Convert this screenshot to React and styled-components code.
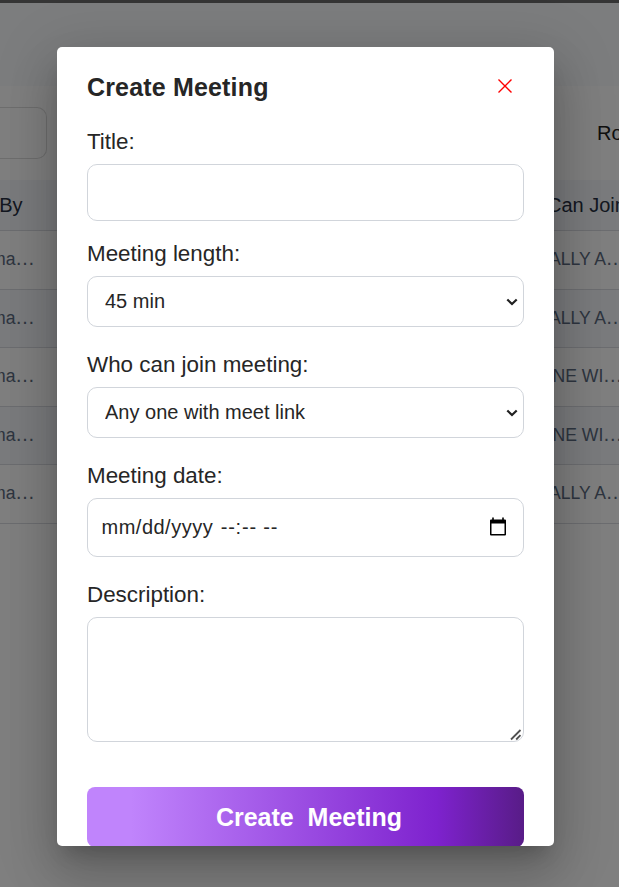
import React from "react";
import styled, { createGlobalStyle } from "styled-components";

const GlobalStyle = createGlobalStyle`
  *, *::before, *::after { box-sizing: border-box; }
  html, body { margin: 0; padding: 0; height: 100%; overflow: hidden; }
  body {
    background: #fff;
    color: #262626;
    font-family: "Liberation Sans", Arial, sans-serif;
  }
`;

const Screen = styled.div`
  position: relative;
  height: 887px;
  overflow: hidden;
`;

const Page = styled.div`
  display: flex;
  flex-direction: column;
  height: 100%;
  background: #fff;
`;

const HeaderBand = styled.header`
  height: 86px;
  flex: none;
  border-top: 3px solid #6a6a6a;
  background: #f8fafd;
`;

const Toolbar = styled.div`
  display: flex;
  justify-content: space-between;
  align-items: flex-start;
  height: 94px;
  flex: none;
  padding-top: 21px;
`;

const SearchBox = styled.div`
  width: 47px;
  height: 52px;
  border: 1px solid #dcdcdc;
  border-left: 0;
  border-radius: 0 10px 10px 0;
`;

const ToolbarText = styled.span`
  width: 22px;
  white-space: nowrap;
  font-size: 20px;
  line-height: 52px;
  color: #212121;
`;

const TableRow = styled.div`
  display: flex;
  justify-content: space-between;
  align-items: center;
  flex: none;
  height: ${(p) => p.$height}px;
  padding-bottom: ${(p) => (p.$head ? 0 : 3)}px;
  border-bottom: 1px solid #d8dbe0;
  background: ${(p) => (p.$shaded ? "#f4f7fb" : "#fff")};
  color: ${(p) => (p.$head ? "#283042" : "#5c6b80")};
  font-size: ${(p) => (p.$head ? 20 : 17.6)}px;
  white-space: nowrap;
`;

const LeftCell = styled.span`
  display: flex;
  align-items: baseline;
  justify-content: flex-end;
  width: ${(p) => p.$width}px;
`;

const RightCell = styled.span`
  display: flex;
  align-items: baseline;
  width: ${(p) => p.$width}px;
`;

const Ellipsis = styled.span`
  margin-left: -0.5px;
  font-size: 20px;
`;

const Backdrop = styled.div`
  position: absolute;
  inset: 0;
  display: flex;
  align-items: flex-start;
  padding: 47px 65px 41px 57px;
  background: rgba(0, 0, 0, 0.5);
`;

const Dialog = styled.form`
  width: 497px;
  height: 799px;
  padding: 0 30px;
  overflow: hidden;
  border-radius: 5px;
  background: #fff;
  box-shadow:
    0 14px 19px -9px rgba(0, 0, 0, 0.2),
    0 30px 48px 4px rgba(0, 0, 0, 0.14),
    0 11px 58px 10px rgba(0, 0, 0, 0.12);
`;

const DialogHeader = styled.div`
  display: flex;
  justify-content: space-between;
  align-items: center;
  height: 80px;
  padding-right: 11px;
`;

const Heading = styled.h2`
  margin: 0;
  font-size: 25px;
  font-weight: 700;
  letter-spacing: 0.17px;
`;

const CloseButton = styled.button`
  display: flex;
  padding: 0 0 2px;
  border: 0;
  background: none;
  color: #f00;
`;

const Field = styled.div`
  display: flex;
  flex-direction: column;
  height: ${(p) => p.$height}px;
`;

const Label = styled.label`
  height: 37px;
  flex: none;
  padding-top: 1px;
  font-size: 22.4px;
  line-height: 28px;
`;

const controlStyle = `
  width: 100%;
  margin: 0;
  border: 1px solid #d1d5db;
  border-radius: 10px;
  outline: none;
  background: #fff;
  color: #262626;
  font-family: inherit;
  font-size: 20px;
`;

const TextInput = styled.input`
  ${controlStyle}
  height: 57px;
  padding: 0 16px;
`;

const SelectWrap = styled.div`
  display: grid;
  align-items: center;
  > * { grid-area: 1 / 1; }
  > svg { justify-self: end; margin-right: 5px; pointer-events: none; }
`;

const Select = styled.select`
  ${controlStyle}
  appearance: none;
  height: 51px;
  padding: 0 17px 1px;
`;

const DateInput = styled.div`
  ${controlStyle}
  display: flex;
  align-items: center;
  height: 59px;
  padding: 0 16px 0 13.5px;
  > svg { margin: 0 0 2px auto; }
`;

const DatePart = styled.span`
  letter-spacing: 0.5px;
`;

const TimePart = styled.span`
  margin-left: 7.5px;
  letter-spacing: 0.8px;
`;

const TextArea = styled.textarea`
  ${controlStyle}
  height: 125px;
  padding: 12px;
  resize: none;
`;

const AreaWrap = styled.div`
  display: grid;
  > * { grid-area: 1 / 1; }
  > svg { place-self: end; margin: 0 2px 1px 0; pointer-events: none; }
`;

const SubmitButton = styled.button`
  display: block;
  width: 100%;
  height: 60px;
  padding: 1px 0 0 7px;
  border: 0;
  border-radius: 8px;
  background: linear-gradient(to right, #c084fc 10%, #7e22ce 80%, #581c87 100%);
  color: #fff;
  font-family: inherit;
  font-size: 25px;
  font-weight: 700;
  white-space: pre;
`;

const CloseIcon = () => (
  <svg width="16" height="16" viewBox="0 0 16 16" fill="none" stroke="currentColor" strokeWidth="1.4">
    <path d="M1.5 1.5 14.5 14.5M14.5 1.5 1.5 14.5" />
  </svg>
);

const Chevron = () => (
  <svg width="14" height="10" viewBox="0 0 14 10" fill="none" stroke="#212121" strokeWidth="2.2">
    <path d="M2.3 2.5 7 7 11.7 2.5" />
  </svg>
);

const CalendarIcon = () => (
  <svg width="18" height="20" viewBox="0 0 18 20" fill="#000">
    <path
      fillRule="evenodd"
      d="M3.2 .5h1.600v2h8.400v-2h1.600v2H16a1 1 0 0 1 1 1v14a1 1 0 0 1-1 1H2a1 1 0 0 1-1-1v-14a1 1 0 0 1 1-1h1.200zM2.500 6.500v10.500h13v-10.500z"
    />
  </svg>
);

const ResizeGrip = () => (
  <svg width="12" height="12" viewBox="0 0 12 12" fill="none" stroke="#505050" strokeWidth="1.8">
    <path d="M1 10.500 10.500 1M6.200 10.500 10.500 6.200" />
  </svg>
);

const rows = [
  { join: "ALLY A", start: 70, height: 59 },
  { join: "ALLY A", start: 70, height: 58, shaded: true },
  { join: "NE WI", start: 66.5, height: 59 },
  { join: "NE WI", start: 66.5, height: 58, shaded: true },
  { join: "ALLY A", start: 70, height: 59 },
];

const SelectField = ({ label, value }) => (
  <Field $height={111}>
    <Label>{label}</Label>
    <SelectWrap>
      <Select defaultValue={value}>
        <option>{value}</option>
      </Select>
      <Chevron />
    </SelectWrap>
  </Field>
);

export default function App() {
  return (
    <Screen>
      <GlobalStyle />
      <Page>
        <HeaderBand />
        <Toolbar>
          <SearchBox />
          <ToolbarText>Ro</ToolbarText>
        </Toolbar>
        <TableRow $head $shaded $height={51}>
          <LeftCell $width={22.5}>By</LeftCell>
          <RightCell $width={72}>Can Join</RightCell>
        </TableRow>
        {rows.map((row, i) => (
          <TableRow key={i} $height={row.height} $shaded={row.shaded}>
            <LeftCell $width={35}>
              ma<Ellipsis>…</Ellipsis>
            </LeftCell>
            <RightCell $width={row.start}>
              {row.join}
              <Ellipsis>…</Ellipsis>
            </RightCell>
          </TableRow>
        ))}
      </Page>
      <Backdrop>
        <Dialog onSubmit={(e) => e.preventDefault()}>
          <DialogHeader>
            <Heading>Create Meeting</Heading>
            <CloseButton type="button" aria-label="Close">
              <CloseIcon />
            </CloseButton>
          </DialogHeader>
          <Field $height={112}>
            <Label>Title:</Label>
            <TextInput type="text" />
          </Field>
          <SelectField label="Meeting length:" value="45 min" />
          <SelectField label="Who can join meeting:" value="Any one with meet link" />
          <Field $height={119}>
            <Label>Meeting date:</Label>
            <DateInput tabIndex={0}>
              <DatePart>mm/dd/yyyy</DatePart>
              <TimePart>--:-- --</TimePart>
              <CalendarIcon />
            </DateInput>
          </Field>
          <Field $height={207}>
            <Label>Description:</Label>
            <AreaWrap>
              <TextArea />
              <ResizeGrip />
            </AreaWrap>
          </Field>
          <SubmitButton type="submit">{"Create  Meeting"}</SubmitButton>
        </Dialog>
      </Backdrop>
    </Screen>
  );
}
